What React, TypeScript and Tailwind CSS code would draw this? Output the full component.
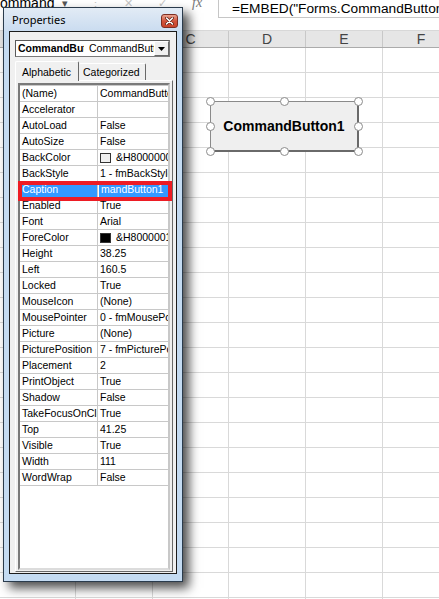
import React from 'react';

const COLS = [
  { k: 'A', w: 'w-[76px]' },
  { k: 'B', w: 'w-[77px]' },
  { k: 'C', w: 'w-[76px]' },
  { k: 'D', w: 'w-[77px]' },
  { k: 'E', w: 'w-[77px]' },
  { k: 'F', w: 'w-[77px]' },
];

type Prop = { name: string; value: string; swatch?: string };

const PROPS: Prop[] = [
  { name: '(Name)', value: 'CommandButton1' },
  { name: 'Accelerator', value: '' },
  { name: 'AutoLoad', value: 'False' },
  { name: 'AutoSize', value: 'False' },
  { name: 'BackColor', value: '&H8000000F&', swatch: 'bg-[#f0f0f0]' },
  { name: 'BackStyle', value: '1 - fmBackStyleOpaque' },
  { name: 'Caption', value: 'mandButton1' },
  { name: 'Enabled', value: 'True' },
  { name: 'Font', value: 'Arial' },
  { name: 'ForeColor', value: '&H80000012&', swatch: 'bg-black' },
  { name: 'Height', value: '38.25' },
  { name: 'Left', value: '160.5' },
  { name: 'Locked', value: 'True' },
  { name: 'MouseIcon', value: '(None)' },
  { name: 'MousePointer', value: '0 - fmMousePointerDefault' },
  { name: 'Picture', value: '(None)' },
  { name: 'PicturePosition', value: '7 - fmPicturePositionAboveCenter' },
  { name: 'Placement', value: '2' },
  { name: 'PrintObject', value: 'True' },
  { name: 'Shadow', value: 'False' },
  { name: 'TakeFocusOnClick', value: 'True' },
  { name: 'Top', value: '41.25' },
  { name: 'Visible', value: 'True' },
  { name: 'Width', value: '111' },
  { name: 'WordWrap', value: 'False' },
];

function Sheet() {
  return (
    <div className="flex flex-col">
      {/* formula bar */}
      <div className="flex h-[18px] text-[#444]">
        <div className="w-[62px] -mt-[4px] text-[14px] leading-[14px] text-black font-['Liberation_Sans',sans-serif] overflow-hidden whitespace-nowrap">
          ommand
        </div>
        <div className="w-[120px] flex -mt-[4px] text-[11px] leading-[14px] text-[#c4c4c4]">
          <span className="w-[28px] text-[#555]">▾</span>
          <span className="w-[34px]">⋮</span>
          <span className="w-[34px]">✕</span>
          <span>✓</span>
        </div>
        <div className="w-[36px] -mt-[4px] pl-[10px] text-[14px] leading-[14px] italic text-[#777] font-['Liberation_Serif',serif]">
          fx
        </div>
        <div className="flex-1 border-l border-b border-[#c6c6c6] pl-[13px] pt-[1px] text-[13.7px] leading-[15px] text-black font-['Liberation_Sans',sans-serif] whitespace-nowrap overflow-hidden">
          =EMBED("Forms.CommandButton.1","")
        </div>
      </div>
      <div className="h-[12px]" />
      {/* column headers */}
      <div className="flex h-[18px] bg-[#e6e6e6] border-b border-[#ababab] border-t border-t-[#d8d8d8]">
        {COLS.map((c) => (
          <div
            key={c.k}
            className={`${c.w} shrink-0 border-r border-[#c8c8c8] flex items-center justify-center text-[14px] text-[#444] font-['Liberation_Sans',sans-serif]`}
          >
            {c.k}
          </div>
        ))}
      </div>
      {Array.from({ length: 23 }).map((_, r) => (
        <div key={r} className="flex h-[25px] border-b border-[#d9d9d9]">
          {COLS.map((c) => (
            <div key={c.k} className={`${c.w} shrink-0 border-r border-[#d9d9d9]`} />
          ))}
        </div>
      ))}
    </div>
  );
}

function Handle({ cls }: { cls: string }) {
  return (
    <div
      className={`absolute ${cls} w-[9px] h-[9px] rounded-full bg-white border-[1.5px] border-[#8c8c8c]`}
    />
  );
}

function SheetButton() {
  return (
    <div className="absolute left-[210px] top-[101px] w-[149px] h-[51px]">
      <div className="w-full h-full bg-[#efefef] border border-[#8a8a8a] border-r-[#6a6a6a] border-b-[#6a6a6a] border-r-2 border-b-2 flex items-center justify-center text-[14px] font-bold text-black font-['Liberation_Sans',sans-serif]">
        CommandButton1
      </div>
      <Handle cls="-left-[4px] -top-[4px]" />
      <Handle cls="left-[70px] -top-[4px]" />
      <Handle cls="-right-[4px] -top-[4px]" />
      <Handle cls="-left-[4px] top-[21px]" />
      <Handle cls="-right-[4px] top-[21px]" />
      <Handle cls="-left-[4px] -bottom-[4px]" />
      <Handle cls="left-[70px] -bottom-[4px]" />
      <Handle cls="-right-[4px] -bottom-[4px]" />
    </div>
  );
}

function CloseButton() {
  return (
    <div className="w-[17px] h-[14px] rounded-[3px] border border-[#7d2e22] bg-gradient-to-b from-[#e9a28f] via-[#d1533b] to-[#c9432a] flex items-center justify-center">
      <svg width="9" height="8" viewBox="0 0 9 8">
        <path d="M1.5 1 L7.5 7 M7.5 1 L1.5 7" stroke="#5a1b10" strokeWidth="3" strokeLinecap="round" />
        <path d="M1.5 1 L7.5 7 M7.5 1 L1.5 7" stroke="#ffffff" strokeWidth="1.6" strokeLinecap="round" />
      </svg>
    </div>
  );
}

function PropRow({ p }: { p: Prop }) {
  const sel = p.name === 'Caption';
  return (
    <div className="flex h-[16px] border-b border-[#c8c8c8] text-[10.5px] leading-[15px]">
      <div
        className={`w-[78px] shrink-0 border-r border-[#c8c8c8] pl-[2px] overflow-hidden whitespace-nowrap ${
          sel ? 'bg-[#3399ff] text-white' : 'text-black'
        }`}
      >
        {p.name}
      </div>
      <div
        className={`flex-1 min-w-0 pl-[2px] overflow-hidden whitespace-nowrap flex items-center ${
          sel ? 'bg-[#3399ff] text-white border-l border-white' : 'text-black'
        }`}
      >
        {p.swatch && (
          <span className={`inline-block w-[11px] h-[10px] shrink-0 border border-[#333] ${p.swatch} mr-[5px]`} />
        )}
        <span>{p.value}</span>
      </div>
    </div>
  );
}

function PropertiesWindow() {
  return (
    <div className="absolute left-[3px] top-[7px] w-[180px] h-[575px] border border-[#2a3b4c] bg-[#c4dbf2] flex flex-col shadow-[6px_6px_10px_rgba(0,0,0,0.7)]">
      <div className="h-[23px] flex items-center pl-[8px] pr-[4px] pt-[2px] bg-gradient-to-b from-[#e2ebf5] to-[#cadcf0]">
        <span className="text-[11px] text-black font-['Noto_Sans',sans-serif]">Properties</span>
        <div className="ml-auto">
          <CloseButton />
        </div>
      </div>
      <div className="flex-1 mx-[5px] mb-[7px] border border-[#1c1c1c] bg-[#f0f0f0] flex flex-col pl-[5px] pt-[8px] font-['Liberation_Sans',sans-serif]">
        {/* object combo */}
        <div className="w-[155px] h-[17px] flex border border-[#7a7a7a] border-t-[#5a5a5a] border-l-[#5a5a5a] bg-white text-[10.5px] leading-[15px]">
          <div className="w-[68px] shrink-0 pl-[2px] font-bold overflow-hidden whitespace-nowrap text-black">
            CommandButton1
          </div>
          <div className="flex-1 min-w-0 pl-[5px] overflow-hidden whitespace-nowrap text-black">
            CommandButton
          </div>
          <div className="w-[15px] shrink-0 bg-[#f0f0f0] border border-white border-r-[#696969] border-b-[#696969] flex items-center justify-center">
            <svg width="7" height="4" viewBox="0 0 7 4">
              <path d="M0 0 H7 L3.5 4 Z" fill="#000" />
            </svg>
          </div>
        </div>
        {/* tabs */}
        <div className="flex items-end h-[21px] mt-[2px] text-[10.5px] text-black">
          <div className="relative z-10 w-[64px] h-[20px] -mb-[1px] bg-[#f0f0f0] border-t border-l border-white border-r border-r-[#696969] rounded-t-[2px] pl-[6px] pt-[3px]">
            Alphabetic
          </div>
          <div className="w-[67px] h-[17px] bg-[#f0f0f0] border-t border-white border-r border-r-[#696969] rounded-t-[2px] pl-[4px] pt-[1px]">
            Categorized
          </div>
        </div>
        {/* panel */}
        <div className="w-[158px] flex-1 mb-[1px] bg-[#f0f0f0] border border-t-white border-l-white border-r-[#696969] border-b-[#696969] p-[2px] pb-[1px]">
          <div className="h-full border-2 border-t-[#7a7a7a] border-l-[#7a7a7a] border-r-[#c8c8c8] border-b-[#dcdcdc] bg-white">
            <div className="border-t border-[#c8c8c8]">
              {PROPS.map((p) => (
                <PropRow key={p.name} p={p} />
              ))}
            </div>
          </div>
        </div>
      </div>
    </div>
  );
}

export default function App() {
  return (
    <div className="relative w-[439px] h-[599px] overflow-hidden bg-white">
      <Sheet />
      <SheetButton />
      <PropertiesWindow />
      <div className="absolute left-[18px] top-[181px] w-[154px] h-[20px] border-4 border-[#ed1c24]" />
    </div>
  );
}
